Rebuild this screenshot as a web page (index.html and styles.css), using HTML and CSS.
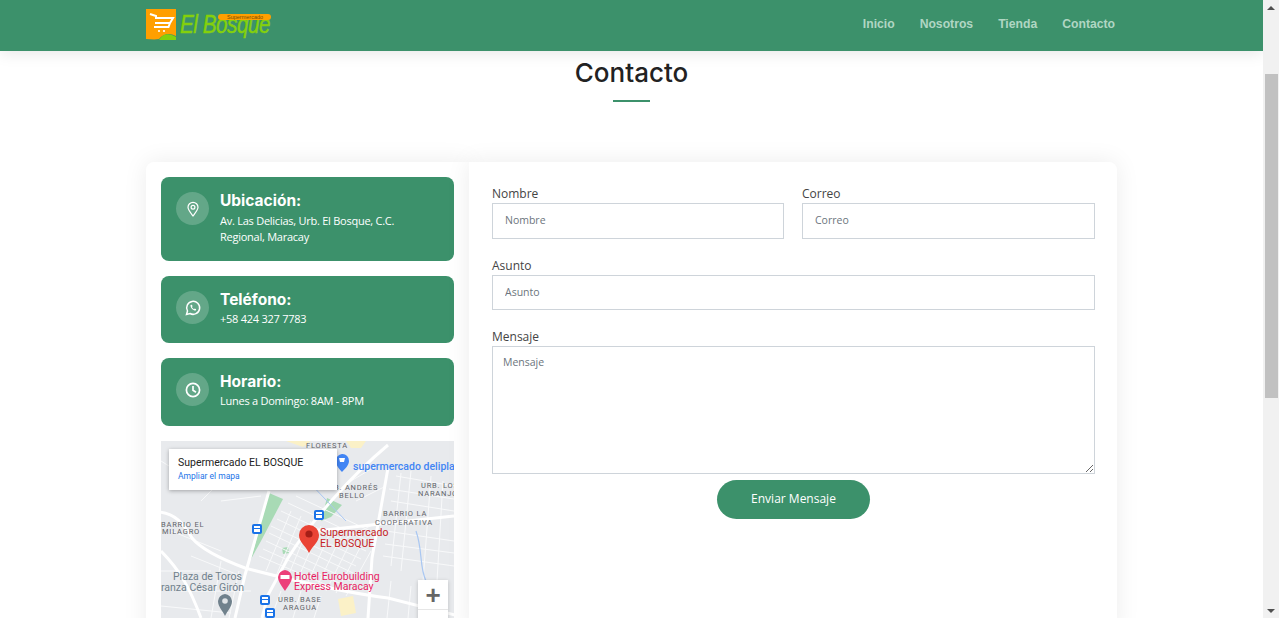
FILE: index.html
```html
<!DOCTYPE html>
<html lang="es">
<head>
    <meta charset="UTF-8">
    <meta name="viewport" content="width=device-width, initial-scale=1.0">
    <title>Supermercado El Bosque - Contacto</title>
    <link rel="stylesheet" href="styles.css">
</head>
<body>
<div class="window">
    <div class="page">
        <header class="topbar">
            <div class="topbar-inner">
                <a class="logo" href="#">
                    <svg class="logo-mark" viewBox="0 0 30 31" width="30" height="31">
                        <path d="M0 0H30V27C24 24 18 24 13 30C8 31 4 30 0 30Z" fill="#ff9f00"/>
                        <path d="M13 31C17 24 23 24 30 28V31Z" fill="#84d00c"/>
                        <path d="M4 5L10 7V9H27L24 14H9M24 14L22.500 18H8" fill="none" stroke="#fff" stroke-width="2"/>
                        <circle cx="13" cy="22" r="1.100" fill="#fff"/>
                        <circle cx="18" cy="22" r="1.100" fill="#fff"/>
                    </svg>
                    <span class="logo-text">El Bosque</span>
                    <span class="logo-tag">Supermercado</span>
                </a>
                <nav class="menu">
                    <a href="#">Inicio</a>
                    <a href="#">Nosotros</a>
                    <a href="#">Tienda</a>
                    <a href="#">Contacto</a>
                </nav>
            </div>
        </header>

        <section class="contact">
            <div class="section-title">
                <h2>Contacto</h2>
            </div>

            <div class="contact-row">
                <aside class="info-col">
                    <div class="info-box box-address">
                        <span class="info-icon">
                            <svg viewBox="0 0 16 16" width="16" height="16" fill="none" stroke="#fff" stroke-width="1.200">
                                <path d="M8 15C5 11 3 8.800 3 6.300A5 5 0 0 1 13 6.300C13 8.800 11 11 8 15Z"/>
                                <circle cx="8" cy="6.200" r="1.900"/>
                            </svg>
                        </span>
                        <div>
                            <h4>Ubicación:</h4>
                            <p>Av. Las Delicias, Urb. El Bosque, C.C. Regional, Maracay</p>
                        </div>
                    </div>
                    <div class="info-box">
                        <span class="info-icon">
                            <svg viewBox="0 0 16 16" width="16" height="16" fill="none" stroke="#fff">
                                <path d="M1.500 14.500L2.500 11A6.500 6.500 0 1 1 5 13.500Z" stroke-width="1.500"/>
                                <path d="M5.500 5C5.300 7.800 8 10.800 10.800 10.600L11.200 9.200L9.800 8.500L9 9.200C8 8.800 7.300 8 6.900 7L7.600 6.200L6.900 4.800Z" fill="#fff" stroke="none"/>
                            </svg>
                        </span>
                        <div>
                            <h4>Teléfono:</h4>
                            <p>+58 424 327 7783</p>
                        </div>
                    </div>
                    <div class="info-box box-hours">
                        <span class="info-icon">
                            <svg viewBox="0 0 16 16" width="16" height="16" fill="none" stroke="#fff" stroke-width="1.700">
                                <circle cx="8" cy="8" r="6.600"/>
                                <path d="M8 4V8.300L11 10.200"/>
                            </svg>
                        </span>
                        <div>
                            <h4>Horario:</h4>
                            <p>Lunes a Domingo: 8AM - 8PM</p>
                        </div>
                    </div>

                    <div class="map">
                        <svg class="map-art" viewBox="0 0 293 200" width="293" height="200">
                            <rect width="293" height="200" fill="#e8eaed"/>
                            <path d="M125 0L150 0L142 6ZM185 0H205L200 7H190Z" fill="#fbf1c7"/>
                            <path d="M108 52L122 58L100 100L90 118Z" fill="#a8dab5"/>
                            <path d="M166 57L181 64L170 76L160 80Z" fill="#a8dab5"/>
                            <path d="M121 107L127 106L128 112L122 113Z" fill="#a8dab5"/>
                            <path d="M177 158L192 155L195 172L180 175Z" fill="#fbf1c7"/>
                            <g fill="none" stroke="#f8f9fa" stroke-width="1">
                                <path d="M110 85L195 125M105 100L190 140M98 115L180 150M120 70L205 110M135 55L220 95"/>
                                <path d="M116 78L200 118M102 108L185 145M127 62L212 102M108 92L192 132"/>
                                <path d="M130 70L105 130M150 80L125 140M170 90L145 145M190 100L165 150M210 110L185 155"/>
                                <path d="M140 75L115 135M160 85L135 142M180 95L155 148M200 105L175 152"/>
                                <path d="M235 35L293 45M230 60L293 70M225 90L293 100M222 115L293 125M228 48L293 58M224 103L293 112"/>
                                <path d="M250 30L240 130M270 35L262 140M240 32L230 125M282 40L276 140"/>
                                <path d="M10 90L60 110M0 130L50 130M20 150L90 150M60 120L50 177M30 115L80 135M0 165L70 172M78 130L68 177"/>
                                <path d="M0 20C30 40 60 45 80 30M40 60L90 10M60 60L100 55"/>
                                <path d="M190 40L215 25M195 60L225 45M180 100L215 82"/>
                                <path d="M120 150L110 177M140 150L132 177M160 155L153 177M230 140L226 177M250 145L247 177M270 150L268 177"/>
                            </g>
                            <g fill="none" stroke="#fff" stroke-width="3">
                                <path d="M-6 71C14 70 24 85 31 97C40 108 60 118 84 127C130 139 180 151 227 157L294 174"/>
                                <path d="M108 50L84 134L74 177"/>
                                <path d="M227 4C190 35 150 80 127 117L107 154L101 177"/>
                                <path d="M227 27L211 117L207 177"/>
                                <path d="M0 110C20 130 30 150 40 177"/>
                                <path d="M155 90L293 75"/>
                            </g>
                            <path d="M145 38L185 80" stroke="#a9c7f2" stroke-width="1" fill="none"/>
                            <path d="M255 90C262 110 258 125 265 140C262 155 270 165 266 177" stroke="#a9c7f2" stroke-width="1.200" fill="none"/>

                            <g class="map-blue">
                                <path d="M181 13A6.500 6.500 0 0 1 188 20C188 24 184 28 181 31C178 28 175 24 175 20A6.500 6.500 0 0 1 181 13Z" fill="#4285f4"/>
                                <path d="M178 17H184L183 21H179Z" fill="#fff"/>
                                <text x="192" y="29">supermercado deliplaza</text>
                            </g>
                            <text class="map-area" x="145" y="7">FLORESTA</text>
                            <text class="map-area" x="173" y="49">B. ANDRÉS</text>
                            <text class="map-area" x="178" y="57">BELLO</text>
                            <text class="map-area" x="260" y="47">URB. LOS</text>
                            <text class="map-area" x="257" y="55">NARANJO</text>
                            <text class="map-area" x="222" y="75">BARRIO LA</text>
                            <text class="map-area" x="214" y="84">COOPERATIVA</text>
                            <text class="map-area" x="0" y="86">BARRIO EL</text>
                            <text class="map-area" x="1" y="93">MILAGRO</text>
                            <text class="map-area" x="117" y="161">URB. BASE</text>
                            <text class="map-area" x="122" y="169">ARAGUA</text>
                            <text class="map-poi" x="12" y="139">Plaza de Toros</text>
                            <text class="map-poi" x="0" y="150">ranza César Girón</text>

                            <g class="map-red">
                                <path d="M148 84A10 10 0 0 1 158 94C158 101 152 104 148 112C144 104 138 101 138 94A10 10 0 0 1 148 84Z" fill="#ea4335"/>
                                <circle cx="148" cy="93" r="3.600" fill="#a51e17"/>
                                <text x="159" y="95">Supermercado</text>
                                <text x="159" y="106">EL BOSQUE</text>
                            </g>
                            <g class="map-pink">
                                <path d="M124 129A7.500 7.500 0 0 1 131 136C131 141 127 145 124 150C121 145 117 141 117 136A7.500 7.500 0 0 1 124 129Z" fill="#ec407a"/>
                                <rect x="119.500" y="134" width="9" height="4" fill="#fff"/>
                                <text x="133" y="139">Hotel Eurobuilding</text>
                                <text x="133" y="149">Express Maracay</text>
                            </g>
                            <path d="M64 153A7.500 7.500 0 0 1 71 160C71 166 66 170 64 175C62 170 57 166 57 160A7.500 7.500 0 0 1 64 153Z" fill="#70818c"/>
                            <circle cx="64" cy="160" r="2.800" fill="#dfe3e6"/>

                            <g fill="#1a73e8">
                                <rect x="153" y="69" width="10" height="10" rx="2"/>
                                <rect x="91" y="83" width="10" height="10" rx="2"/>
                                <rect x="99" y="154" width="10" height="10" rx="2"/>
                                <rect x="104" y="167" width="10" height="10" rx="2"/>
                            </g>
                            <g fill="#fff">
                                <rect x="155" y="71" width="6" height="2"/>
                                <rect x="155" y="74" width="6" height="3"/>
                                <rect x="93" y="85" width="6" height="2"/>
                                <rect x="93" y="88" width="6" height="3"/>
                                <rect x="101" y="156" width="6" height="2"/>
                                <rect x="101" y="159" width="6" height="3"/>
                                <rect x="106" y="169" width="6" height="2"/>
                                <rect x="106" y="172" width="6" height="3"/>
                            </g>
                        </svg>
                        <div class="map-card">
                            <div class="map-card-title">Supermercado EL BOSQUE</div>
                            <a class="map-card-link" href="#">Ampliar el mapa</a>
                        </div>
                        <div class="map-zoom">
                            <span class="map-plus">+</span>
                        </div>
                    </div>
                </aside>

                <form class="form-col">
                    <div class="form-pair">
                        <div class="field">
                            <label for="nombre">Nombre</label>
                            <input type="text" id="nombre" class="input-first" placeholder="Nombre">
                        </div>
                        <div class="field">
                            <label for="correo">Correo</label>
                            <input type="text" id="correo" class="input-first" placeholder="Correo">
                        </div>
                    </div>
                    <div class="field">
                        <label for="asunto">Asunto</label>
                        <input type="text" id="asunto" placeholder="Asunto">
                    </div>
                    <div class="field">
                        <label for="mensaje">Mensaje</label>
                        <textarea id="mensaje" placeholder="Mensaje"></textarea>
                    </div>
                    <div class="form-submit">
                        <button type="button">Enviar Mensaje</button>
                    </div>
                </form>
            </div>
        </section>
    </div>

    <div class="scrollbar">
        <span class="arrow-up"></span>
        <div class="scroll-track"><div class="scroll-thumb"></div></div>
        <span class="arrow-down"></span>
    </div>
</div>
</body>
</html>
```

FILE: styles.css
```css
* {
    box-sizing: border-box;
}
html, body {
    height: 100%;
    overflow: hidden;
}
body {
    margin: 0;
    font-family: "Open Sans", sans-serif;
    color: #444;
    background-color: #fff;
}
.window {
    display: flex;
    height: 618px;
}
.page {
    flex: 1;
    min-width: 0;
    overflow: hidden;
}

/* header */
.topbar {
    position: relative;
    z-index: 2;
    height: 51px;
    background-color: #3c916b;
    box-shadow: 0 2px 15px rgba(0, 0, 0, 0.1);
}
.topbar-inner {
    display: flex;
    justify-content: space-between;
    width: 971px;
    margin: 0 auto;
}
.logo {
    position: relative;
    display: flex;
    gap: 4px;
    height: 40px;
    padding-top: 9px;
    text-decoration: none;
}
.logo-text {
    font-family: "Liberation Sans", sans-serif;
    font-style: italic;
    font-size: 26.500px;
    line-height: 30px;
    letter-spacing: -0.6px;
    color: #84d00c;
    -webkit-text-stroke: 0.5px #84d00c;
    transform: scaleX(0.78);
    transform-origin: left center;
}
.logo-tag {
    position: absolute;
    left: 72px;
    top: 14px;
    width: 53px;
    height: 6px;
    padding-left: 9px;
    border-radius: 3px;
    background-color: #ff9f00;
    font-family: "Liberation Sans", sans-serif;
    font-size: 5.500px;
    line-height: 6px;
    color: #7a4a00;
}
.menu {
    display: flex;
    gap: 25px;
    padding: 17px 2px 0 0;
}
.menu a {
    font-family: "Liberation Sans", sans-serif;
    font-size: 12.200px;
    font-weight: bold;
    line-height: 14px;
    color: #b0d6c3;
    text-decoration: none;
}

/* title */
.section-title {
    height: 111px;
    padding-top: 8px;
    text-align: center;
}
.section-title h2 {
    position: relative;
    display: inline-block;
    margin: 0;
    font-family: Inter, sans-serif;
    font-size: 26px;
    font-weight: 500;
    line-height: 28px;
    color: #222;
}
.section-title h2::after {
    content: "";
    position: absolute;
    left: 38px;
    top: 41px;
    width: 37px;
    height: 2px;
    background-color: #3c916b;
}

/* columns */
.contact-row {
    display: flex;
    width: 971px;
    margin: 0 auto;
}
.info-col {
    width: 323px;
    padding: 15px;
    background-color: #fff;
    border-radius: 8px 0 0 0;
    box-shadow: 0 0 24px rgba(0, 0, 0, 0.08);
}
.form-col {
    position: relative;
    width: 648px;
    height: 470px;
    padding: 23px 22px 0 23px;
    background-color: #fff;
    border-radius: 0 8px 0 0;
    box-shadow: 0 0 24px rgba(0, 0, 0, 0.08);
}

/* info boxes */
.info-box {
    display: flex;
    gap: 11px;
    height: 67px;
    margin-bottom: 15px;
    padding: 15px;
    border-radius: 8px;
    background-color: #3c916b;
    color: #fff;
}
.box-address {
    height: 84px;
}
.box-hours {
    height: 68px;
}
.info-icon {
    display: flex;
    flex: none;
    align-items: center;
    justify-content: center;
    width: 33px;
    height: 33px;
    border-radius: 50%;
    background-color: rgba(255, 255, 255, 0.2);
}
.info-box h4 {
    margin: 0;
    font-family: Inter, sans-serif;
    font-size: 15.500px;
    font-weight: 700;
    line-height: 18px;
}
.info-box p {
    margin: 2px 0 0;
    font-size: 11px;
    letter-spacing: -0.25px;
    line-height: 16px;
}
.box-address p {
    margin-top: 3px;
}

/* map */
.map {
    position: relative;
    height: 200px;
    overflow: hidden;
}
.map-art {
    display: block;
}
.map-art text {
    font-family: Roboto, sans-serif;
}
.map-area {
    font-size: 7.500px;
    letter-spacing: 0.8px;
    fill: #5f6368;
}
.map-poi {
    font-size: 10.500px;
    fill: #70818c;
}
.map-blue text {
    font-size: 10.500px;
    font-weight: 500;
    fill: #4285f4;
}
.map-red text {
    font-size: 10.500px;
    fill: #c5221f;
}
.map-pink text {
    font-size: 10.500px;
    fill: #e91e63;
}
.map-card {
    position: absolute;
    left: 8px;
    top: 8px;
    width: 168px;
    height: 41px;
    padding: 7px 9px;
    background-color: #fff;
    box-shadow: 0 1px 4px rgba(0, 0, 0, 0.3);
    font-family: Roboto, sans-serif;
}
.map-card-title {
    font-size: 10.500px;
    line-height: 13px;
    color: #222;
}
.map-card-link {
    display: block;
    margin-top: 2px;
    font-size: 8.500px;
    line-height: 11px;
    color: #1a73e8;
    text-decoration: none;
}
.map-zoom {
    position: absolute;
    left: 257px;
    top: 139px;
    width: 30px;
    height: 60px;
    background-color: #fff;
    box-shadow: 0 1px 4px rgba(0, 0, 0, 0.2);
}
.map-plus {
    display: block;
    height: 30px;
    border-bottom: 1px solid #e6e6e6;
    font-family: "Liberation Sans", sans-serif;
    font-size: 26px;
    font-weight: bold;
    line-height: 31px;
    text-align: center;
    color: #666;
}

/* form */
.form-pair {
    display: grid;
    grid-template-columns: 292px 293px;
    gap: 18px;
}
.field {
    margin-bottom: 18px;
}
.field label {
    display: block;
    height: 18px;
    font-size: 12px;
    line-height: 18px;
    color: #444;
}
.field input, .field textarea {
    display: block;
    width: 100%;
    height: 35px;
    padding: 0 12px 2px;
    border: 1px solid #ced4da;
    border-radius: 0;
    font-family: "Open Sans", sans-serif;
    font-size: 10.500px;
    color: #444;
    background-color: #fff;
}
.field .input-first {
    height: 36px;
    padding-bottom: 3px;
}
.field textarea {
    height: 128px;
    margin-bottom: -12px;
    padding: 8px 10px;
    resize: vertical;
}
.field input::placeholder, .field textarea::placeholder {
    color: #6c757d;
    opacity: 1;
}
.form-submit {
    text-align: center;
}
.form-submit button {
    width: 153px;
    height: 39px;
    padding: 0 0 2px;
    border: none;
    border-radius: 20px;
    background-color: #3c916b;
    font-family: "Open Sans", sans-serif;
    font-size: 12px;
    color: #fff;
    cursor: pointer;
}

/* scrollbar */
.scrollbar {
    display: flex;
    flex: none;
    flex-direction: column;
    align-items: center;
    justify-content: space-between;
    width: 16px;
    background-color: #f1f1f1;
}
.arrow-up, .arrow-down {
    flex: none;
    width: 0;
    height: 0;
    margin: 6px 0 5px;
    border-left: 4px solid transparent;
    border-right: 4px solid transparent;
}
.arrow-up {
    border-bottom: 4px solid #505050;
}
.arrow-down {
    border-top: 4px solid #505050;
}
.scroll-track {
    flex: 1;
    width: 100%;
    padding: 59px 1px 0 2px;
}
.scroll-thumb {
    height: 324px;
    background-color: #c1c1c1;
}
```
